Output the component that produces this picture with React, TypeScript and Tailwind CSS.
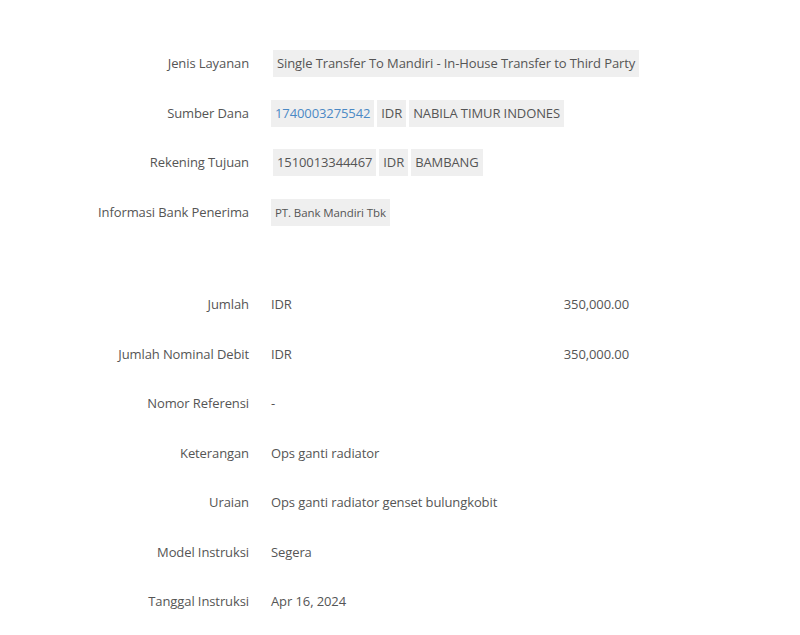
import React from "react";

const Box = ({ children, className = "" }: { children: React.ReactNode; className?: string }) => (
  <span className={`inline-flex items-center h-[27px] px-[4px] bg-[#efefef] ${className}`}>{children}</span>
);

const Row = ({ label, children }: { label: string; children: React.ReactNode }) => (
  <div className="flex items-center h-[49.5px]">
    <div className="w-[250px] pr-[1px] text-right text-[#555]">{label}</div>
    <div className="flex-1 flex items-center pl-[21px]">{children}</div>
  </div>
);

export default function App() {
  return (
    <div
      className="w-[800px] h-[635px] bg-white text-[13px] tracking-[-0.1px] text-[#555] pt-[39px]"
      style={{ fontFamily: '"Open Sans", "Liberation Sans", sans-serif' }}
    >
      <Row label="Jenis Layanan">
        <Box className="ml-[2px]">Single Transfer To Mandiri - In-House Transfer to Third Party</Box>
      </Row>
      <Row label="Sumber Dana">
        <div className="flex gap-[3px]">
          <Box className="text-[#4b89c5]">1740003275542</Box>
          <Box>IDR</Box>
          <Box>NABILA TIMUR INDONES</Box>
        </div>
      </Row>
      <Row label="Rekening Tujuan">
        <div className="flex gap-[3px] ml-[2px]">
          <Box>1510013344467</Box>
          <Box>IDR</Box>
          <Box>BAMBANG</Box>
        </div>
      </Row>
      <Row label="Informasi Bank Penerima">
        <Box className="text-[11.5px] h-[25px]">PT. Bank Mandiri Tbk</Box>
      </Row>
      <div className="h-[43px]" />
      <Row label="Jumlah">
        <div className="flex w-[358px] justify-between">
          <span>IDR</span>
          <span>350,000.00</span>
        </div>
      </Row>
      <Row label="Jumlah Nominal Debit">
        <div className="flex w-[358px] justify-between">
          <span>IDR</span>
          <span>350,000.00</span>
        </div>
      </Row>
      <Row label="Nomor Referensi">
        <span>-</span>
      </Row>
      <Row label="Keterangan">
        <span>Ops ganti radiator</span>
      </Row>
      <Row label="Uraian">
        <span>Ops ganti radiator genset bulungkobit</span>
      </Row>
      <Row label="Model Instruksi">
        <span>Segera</span>
      </Row>
      <Row label="Tanggal Instruksi">
        <span>Apr 16, 2024</span>
      </Row>
    </div>
  );
}
